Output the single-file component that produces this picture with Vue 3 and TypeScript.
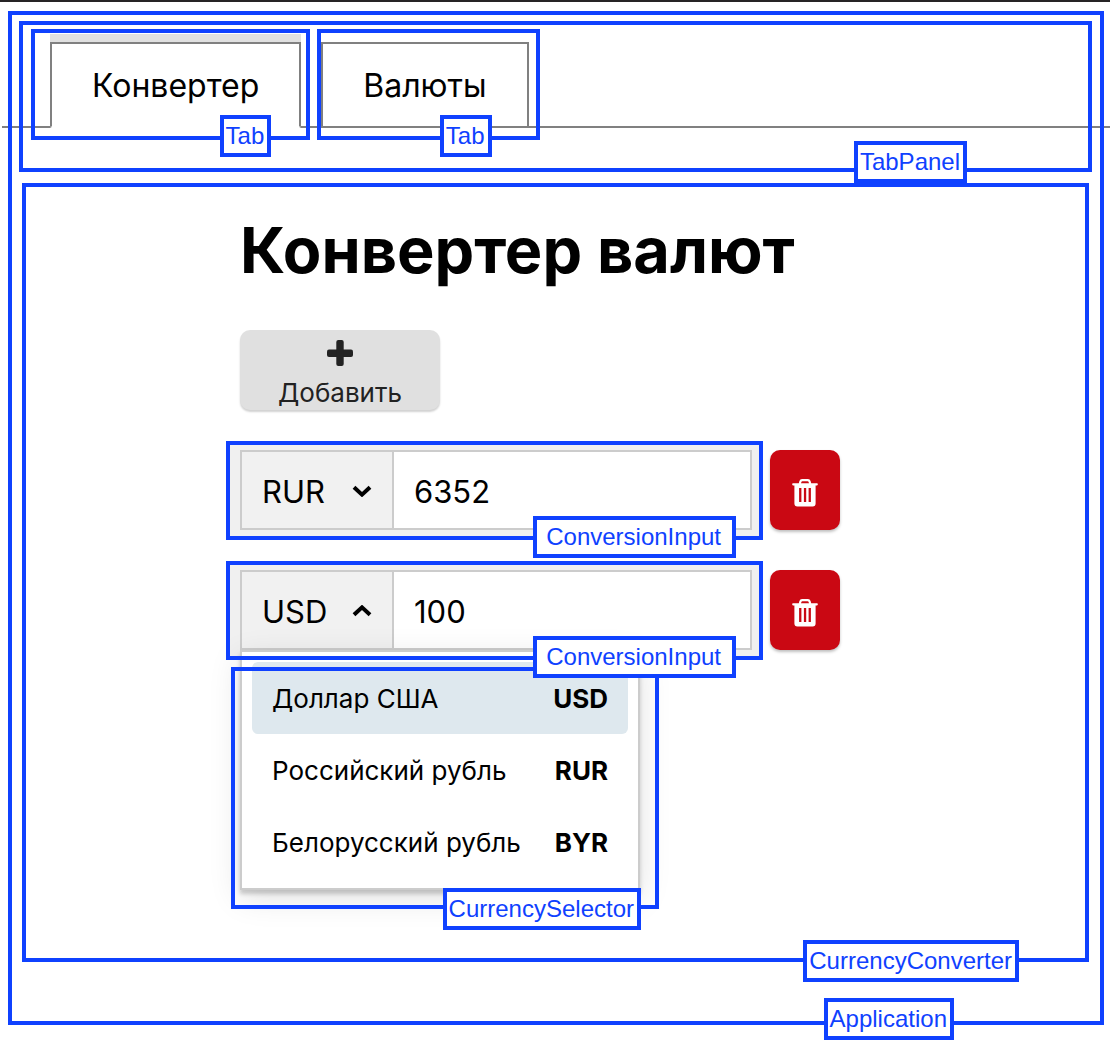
<script setup lang="ts">
import { ref } from 'vue'

interface Currency {
  code: string
  name: string
}

interface Row {
  id: number
  code: string
  amount: string
}

const tabs = ['Конвертер', 'Валюты']
const activeTab = ref(0)

const currencies: Currency[] = [
  { code: 'USD', name: 'Доллар США' },
  { code: 'RUR', name: 'Российский рубль' },
  { code: 'BYR', name: 'Белорусский рубль' },
]

const rows = ref<Row[]>([
  { id: 1, code: 'RUR', amount: '6352' },
  { id: 2, code: 'USD', amount: '100' },
])
const openRow = ref<number | null>(2)
let nextId = 3

function addRow() {
  rows.value.push({ id: nextId++, code: 'BYR', amount: '0' })
}

function removeRow(id: number) {
  rows.value = rows.value.filter((row) => row.id !== id)
}

function toggle(id: number) {
  openRow.value = openRow.value === id ? null : id
}

function pick(row: Row, code: string) {
  row.code = code
  openRow.value = null
}
</script>

<template>
  <div class="app">
    <nav class="tab-panel">
      <div class="tabs" role="tablist">
        <div v-for="(tab, i) in tabs" :key="tab" class="tab-slot">
          <button
            type="button"
            role="tab"
            class="tab"
            :class="{ active: activeTab === i }"
            :aria-selected="activeTab === i"
            @click="activeTab = i"
          >{{ tab }}</button>
          <div class="outline outline-tab"><span class="tag">Tab</span></div>
        </div>
      </div>
      <div class="outline outline-panel"><span class="tag">TabPanel</span></div>
    </nav>

    <main class="converter">
      <h1>Конвертер валют</h1>
      <button type="button" class="add" @click="addRow">
        <svg width="26" height="26" viewBox="0 0 26 26" aria-hidden="true">
          <rect x="0" y="9.5" width="26" height="7.4" rx="2" />
          <rect x="9.3" y="0" width="7.4" height="26" rx="2" />
        </svg>
        <span>Добавить</span>
      </button>

      <div v-for="row in rows" :key="row.id" class="row">
        <div class="conversion">
          <div class="control">
            <div class="picker">
              <select
                v-model="row.code"
                aria-label="Валюта"
                @mousedown.prevent="toggle(row.id)"
              >
                <option v-for="c in currencies" :key="c.code" :value="c.code">{{ c.code }}</option>
              </select>
              <svg class="chevron" :class="{ up: openRow === row.id }" width="20" height="12" viewBox="0 0 20 12" aria-hidden="true">
                <path d="M2 2.200 10 9.600l8-7.400" />
              </svg>
            </div>
            <input v-model="row.amount" type="text" inputmode="decimal" aria-label="Сумма" />
          </div>
          <ul v-if="openRow === row.id" class="dropdown" role="listbox" aria-label="Валюты">
            <li
              v-for="c in currencies"
              :key="c.code"
              role="option"
              :aria-selected="c.code === row.code"
              :class="{ selected: c.code === row.code }"
              @click="pick(row, c.code)"
            >
              <span>{{ c.name }}</span>
              <b>{{ c.code }}</b>
            </li>
            <li class="outline outline-selector" role="presentation"><span class="tag">CurrencySelector</span></li>
          </ul>
          <div class="outline outline-input"><span class="tag">ConversionInput</span></div>
        </div>
        <button type="button" class="remove" aria-label="Удалить" @click="removeRow(row.id)">
          <svg width="26" height="28" viewBox="0 0 26 28" aria-hidden="true">
            <path
              fill-rule="evenodd"
              d="M6.800 4.200 7.400 2a2.800 2.800 0 0 1 2.700-2h5.800a2.800 2.800 0 0 1 2.700 2l.6 2.200H25a.8.8 0 0 1 .8.8v.6a.8.8 0 0 1-.8.8h-1.400V24.600a3 3 0 0 1-3 3H5.400a3 3 0 0 1-3-3V6.400H1a.8.8 0 0 1-.8-.8V5a.8.8 0 0 1 .8-.8ZM9 4.200h8l-.5-1.400a.9.9 0 0 0-.8-.6h-5.400a.9.9 0 0 0-.8.6ZM7.100 9v14h2.300V9ZM11.900 9v14h2.300V9ZM16.600 9v14h2.300V9Z"
            />
          </svg>
        </button>
      </div>
      <div class="outline outline-converter"><span class="tag">CurrencyConverter</span></div>
    </main>
    <div class="outline outline-app"><span class="tag">Application</span></div>
  </div>
</template>

<style>
body {
  background: #fff;
}
</style>

<style scoped>
.app,
.app * {
  box-sizing: border-box;
}

.app {
  position: relative;
  min-height: 100vh;
  padding-bottom: 92px;
  border-top: 2px solid #262425;
  font-family: Inter, "Liberation Sans", sans-serif;
  color: #000;
}

button,
select,
input {
  margin: 0;
  font-family: inherit;
  color: inherit;
  outline: none;
}

button,
select {
  cursor: pointer;
}

/* Tabs */
.tab-panel {
  position: relative;
  padding: 40px 0 55px 2px;
}

.tabs {
  display: flex;
  gap: 20px;
  padding-left: 48px;
  border-bottom: 2px solid #808080;
}

.tab-slot {
  position: relative;
  margin-bottom: -2px;
}

.tab {
  display: block;
  height: 86px;
  padding: 2px 40px 0;
  border: 2px solid #808080;
  background: #fff;
  font-size: 32px;
  line-height: 40px;
}

.tab.active {
  border-bottom-color: #fff;
  border-radius: 0 0 2px 2px;
  box-shadow: 0 -8px 0 #e0e0e0;
}

/* Converter */
.converter {
  position: relative;
  margin: 0 21px 0 22px;
  padding: 27px 0 72px 218px;
  min-height: 779px;
}

h1 {
  margin: 0 0 40px;
  font-size: 63px;
  line-height: 80px;
  font-weight: 700;
  white-space: nowrap;
}

.add {
  display: flex;
  flex-direction: column;
  align-items: center;
  gap: 10px;
  width: 200px;
  height: 80px;
  margin-bottom: 40px;
  padding: 10px 0 0;
  border: 0;
  border-radius: 10px;
  background: #e0e0e0;
  box-shadow: 0 2px 2px rgba(0, 0, 0, 0.18);
  color: #222;
  font-size: 26px;
  line-height: 34px;
}

.add svg {
  flex: none;
  fill: #222;
}

.row {
  display: flex;
  gap: 18px;
  max-width: 600px;
  margin-bottom: 40px;
}

.conversion {
  position: relative;
  flex: 1;
  min-width: 0;
}

.conversion::before {
  content: "";
  position: absolute;
  inset: -9px -11px -10px -14px;
  background: #f0f0f0;
}

.control {
  position: relative;
  display: flex;
  height: 80px;
  border: 2px solid #ccc;
  background: #fff;
}

.picker {
  position: relative;
  flex: none;
  width: 152px;
  border-right: 2px solid #ccc;
  background: #f1f1f1;
}

.picker select {
  appearance: none;
  width: 100%;
  height: 100%;
  padding: 2px 20px 0;
  border: 0;
  background: transparent;
  font-size: 31px;
}

.chevron {
  position: absolute;
  right: 20px;
  top: 33px;
  fill: none;
  stroke: #000;
  stroke-width: 4;
  pointer-events: none;
}

.chevron.up {
  transform: scaleY(-1);
}

.control input {
  flex: 1;
  min-width: 0;
  padding: 2px 20px 0;
  border: 0;
  background: transparent;
  font-size: 31px;
}

.remove {
  display: flex;
  align-items: center;
  justify-content: center;
  flex: none;
  width: 70px;
  height: 80px;
  padding: 6px 0 0;
  border: 0;
  border-radius: 10px;
  background: #ca0813;
  box-shadow: 0 2px 3px rgba(0, 0, 0, 0.25);
}

.remove svg {
  fill: #fff;
}

.dropdown {
  position: absolute;
  top: 100%;
  left: 0;
  width: 400px;
  margin: 0;
  padding: 10px;
  border: 2px solid #ccc;
  background: #fff;
  box-shadow: 0 4px 4px rgba(0, 0, 0, 0.18), 0 8px 30px rgba(0, 0, 0, 0.12);
  list-style: none;
  font-size: 26px;
}

.dropdown li:not(.outline) {
  display: flex;
  align-items: center;
  justify-content: space-between;
  height: 72px;
  padding: 0 20px;
  border-radius: 6px;
  white-space: nowrap;
  cursor: pointer;
}

.dropdown li.selected {
  background: #dee8ee;
}

/* Component boundaries */
.outline {
  position: absolute;
  border: 4px solid #0f41ff;
  pointer-events: none;
}

.tag {
  position: absolute;
  height: 42px;
  padding: 0 3px 0 2px;
  border: 4px solid #0f41ff;
  background: #fff;
  color: #0f41ff;
  font-family: "Liberation Sans", Arial, sans-serif;
  font-size: 24px;
  line-height: 34px;
  font-weight: 400;
  white-space: nowrap;
}

.outline-tab {
  inset: -13px -9px -12px -19px;
}

.outline-tab .tag {
  right: 35px;
  bottom: -21px;
}

.tab-slot + .tab-slot .outline-tab {
  right: -11px;
  left: -4px;
}

.tab-slot + .tab-slot .tag {
  right: 44px;
}

.outline-panel {
  inset: 19px 18px 11px 19px;
}

.outline-panel .tag {
  right: 121px;
  bottom: -15px;
}

.outline-converter {
  inset: 0;
}

.outline-converter .tag {
  right: 66px;
  bottom: -24px;
}

.outline-app {
  inset: 9px 6px 29px 8px;
}

.outline-app .tag {
  right: 146px;
  bottom: -19px;
}

.outline-input {
  inset: -9px -11px -10px -14px;
}

.outline-input .tag {
  right: 23px;
  bottom: -22px;
  padding: 0 11px 0 9px;
}

.outline-selector {
  inset: 15px -21px -21px -11px;
}

.outline-selector .tag {
  right: 14px;
  bottom: -25px;
}
</style>
